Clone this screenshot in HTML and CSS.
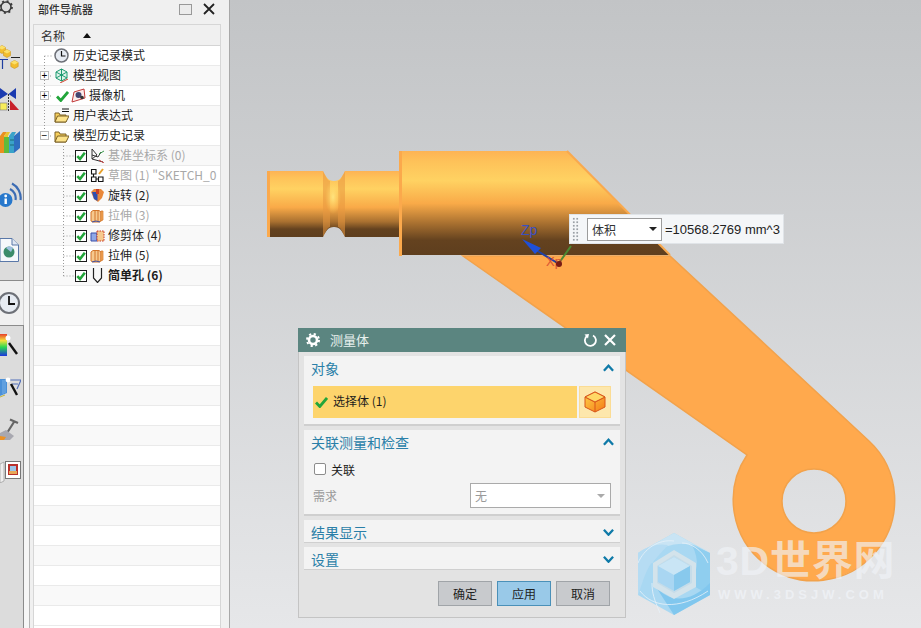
FILE: index.html
```html
<!DOCTYPE html>
<html lang="zh">
<head>
<meta charset="utf-8">
<title>测量体</title>
<link rel="stylesheet" href="styles.css">
</head>
<body>
<svg class="defs" width="0" height="0">
  <defs>
    <symbol id="chk" viewBox="0 0 12 12"><rect x=".5" y=".5" width="11" height="11" fill="#fff" stroke="#1c1c1c"/><path d="M2.300 6.200 5 9 9.800 2.800" fill="none" stroke="#22a53a" stroke-width="2.600"/></symbol>
    <symbol id="ext" viewBox="0 0 15 15"><path d="M1 4 3 2.500H9L11 4V13L9 14H3L1 13Z" fill="#f6c98e" stroke="#d2752a"/><path d="M5 3V13M8 3V13" stroke="#d2752a"/><path d="M2 14 6 13 10 14" stroke="#3a4fa8" fill="none"/><path d="M11 3H13V12L11 13Z" fill="#f3a95a" stroke="#d2752a" stroke-width=".7"/></symbol>
    <symbol id="cube" viewBox="0 0 10 11"><path d="M5 .5 9.500 3V8L5 10.500 .5 8V3Z" fill="#f2bd2e" stroke="#c8921c" stroke-width=".7"/><path d="M5 .5 9.500 3 5 5.500 .5 3Z" fill="#fbe06a"/></symbol>
  </defs>
</svg>
<div class="app">
  <aside class="toolbar">
    <div class="tool-group first">
      <svg class="t t-gear" viewBox="0 0 14 14"><circle cx="6" cy="7" r="5" fill="none" stroke="#3b3b3b" stroke-width="1.600"/><circle cx="6" cy="7" r="6" fill="none" stroke="#3b3b3b" stroke-width="1.800" stroke-dasharray="2 2.700"/></svg>
      <svg class="t t-boxes" viewBox="0 0 21 24"><use href="#cube" x="-2" y="0" width="8" height="9"/><use href="#cube" x="3" y="4" width="8" height="9"/><use href="#cube" x="10" y="15" width="9" height="9"/><path d="M0 14.500H8M2.500 14.500V24" stroke="#1f3fa0" stroke-width="1.200" fill="none"/><path d="M11 12.500H20" stroke="#222"/></svg>
      <svg class="t t-bow" viewBox="0 0 20 24"><path d="M0 1 8 7 0 12ZM16 1 8.500 7 16 12Z" fill="#1b3bb0"/><path d="M8.500 7V24" stroke="#333" stroke-dasharray="2 1"/><rect x="0" y="16" width="7" height="7" fill="#f6ec5a" stroke="#777" stroke-width=".6"/><path d="M10 23V13L19 23Z" fill="#c8202a"/></svg>
      <svg class="t t-books" viewBox="0 0 21 23"><path d="M0 5 3 1H7L4 5V22H0Z" fill="#e98f1f"/><path d="M4 5 7 1H10L8 5V22H4Z" fill="#ebc52e"/><rect x="4" y="6" width="5" height="16" fill="#5fbb3c"/><path d="M9 5 12 1H16L14 5V22H9Z" fill="#3aa3c9"/><path d="M14 5 20 0V17L14 22Z" fill="#2f6fbf"/><path d="M10 9H14M10 14H14" stroke="#155" stroke-width=".7"/></svg>
      <svg class="t t-wifi" viewBox="0 0 22 25"><path d="M10 7A10 10 0 0 1 15.500 18M12 1.500A16 16 0 0 1 20.500 18" fill="none" stroke="#3c6cb4" stroke-width="2.200"/><circle cx="5.500" cy="18" r="7" fill="#2878cc"/><rect x="4.500" y="16.500" width="2.400" height="5.500" fill="#fff"/><circle cx="5.700" cy="14" r="1.400" fill="#fff"/></svg>
      <svg class="t t-doc" viewBox="0 0 20 24"><path d="M0 .5H12L18.500 7V23.500H0Z" fill="#f6f8fb" stroke="#5a78a8"/><path d="M12 .5V7H18.500" fill="#dfe6f2" stroke="#5a78a8"/><circle cx="9" cy="14" r="5.500" fill="#3c8c6a"/><path d="M6 10A5 5 0 0 1 13 10L11 14Z" fill="#9fc0df"/></svg>
    </div>
    <div class="tool-gap">
      <svg class="t t-clock" viewBox="0 0 21 24"><circle cx="9" cy="12" r="10" fill="#e6ebf2" stroke="#6d7077" stroke-width="2"/><path d="M9 5V13H15" fill="none" stroke="#111" stroke-width="1.800"/></svg>
    </div>
    <div class="tool-group second">
      <svg class="t t-rain" viewBox="0 0 20 24"><defs><linearGradient id="rb" x1="0" x2="0" y1="0" y2="1"><stop offset="0" stop-color="#e8402a"/><stop offset=".3" stop-color="#f4e03a"/><stop offset=".6" stop-color="#28d850"/><stop offset="1" stop-color="#1c34e0"/></linearGradient></defs><rect x="-1" y="1" width="8" height="22" fill="url(#rb)"/><path d="M9 10 17 21" stroke="#111" stroke-width="2.400"/><circle cx="8" cy="5" r="2.500" fill="#fff"/></svg>
      <svg class="t t-fan" viewBox="0 0 21 23"><path d="M0 3H7V17L0 20Z" fill="#4a90d8"/><path d="M3 4V18M5 4V17" stroke="#8cc0ee" stroke-width=".7"/><path d="M10 4H21L17 13M12 8H18" fill="none" stroke="#5370ba" stroke-width="1.200"/><path d="M11 8 17 19" stroke="#111" stroke-width="2.400"/><circle cx="8" cy="4" r="2.400" fill="#fff"/><path d="M0 21 5 19" stroke="#c4b63a"/></svg>
      <svg class="t t-ham" viewBox="0 0 20 23"><path d="M7 15 14 4M10 1.500 18 5" stroke="#666" stroke-width="2.200" fill="none"/><path d="M0 15 6 12 14 18 10 22H0Z" fill="#a8a8b0"/><path d="M0 18 6 19 4 22H0Z" fill="#ec9226"/></svg>
      <svg class="t t-pic" viewBox="0 0 21 22"><path d="M0 3 4 1V20L0 22Z" fill="#eee" stroke="#999" stroke-width=".7"/><rect x="5.500" y=".5" width="15" height="17" fill="#fff" stroke="#777"/><rect x="8" y="3" width="10" height="11" fill="#b9302c"/><rect x="10" y="5" width="6" height="5" fill="#9cc4e8"/><rect x="9" y="10" width="8" height="3" fill="#e8a858"/></svg>
    </div>
  </aside>

  <section class="nav">
    <header class="nav-title">
      <span>部件导航器</span>
      <span class="nav-win"></span>
      <svg class="nav-close" viewBox="0 0 12 12"><path d="M1 1 11 11M11 1 1 11" stroke="#222" stroke-width="1.800"/></svg>
    </header>
    <div class="tree">
      <div class="tree-head"><span>名称</span><i class="sort"></i></div>
      <svg class="guides" width="60" height="240"><path d="M10.500 10V90M10.500 10H19M16 30H19M16 50H19M16 90H19M29.500 100V230M29.500 110H40M29.500 130H40M29.500 150H40M29.500 170H40M29.500 190H40M29.500 210H40M29.500 230H40" fill="none" stroke="#9a9a9a" stroke-dasharray="1 2"/></svg>

      <div class="row l1">
        <svg class="ic" viewBox="0 0 15 15"><circle cx="7.500" cy="7.500" r="6.500" fill="#e6ebf2" stroke="#6d7077" stroke-width="1.500"/><path d="M7.500 3V8H11.500" fill="none" stroke="#111" stroke-width="1.200"/></svg>
        <span>历史记录模式</span>
      </div>
      <div class="row l1 alt">
        <b class="tw">+</b>
        <svg class="ic" viewBox="0 0 15 15"><path d="M7.500 1 13 4V10L7.500 13 2 10V4Z M2 4 13 10M13 4 2 10M7.500 1V13" fill="#dff3ea" stroke="#1d9a70"/><path d="M6 15 14 11" stroke="#d0402c"/></svg>
        <span>模型视图</span>
      </div>
      <div class="row l1">
        <b class="tw">+</b>
        <svg class="ic-check" viewBox="0 0 13 12"><path d="M1 6.500 4.800 10.500 12 2" fill="none" stroke="#22a53a" stroke-width="2.800"/></svg>
        <svg class="ic cam" viewBox="0 0 15 15"><path d="M3 4 13 1 14 10 1 14Z" fill="#fbeaea" stroke="#c23a3a"/><circle cx="7.500" cy="7" r="3" fill="#444470"/><circle cx="11" cy="9.500" r="1.800" fill="#333"/></svg>
        <span>摄像机</span>
      </div>
      <div class="row l1 alt">
        <svg class="ic" viewBox="0 0 15 15"><path d="M1 14V5H5L6 7H12V14Z" fill="#f6cf5c" stroke="#7a6126"/><path d="M1 14 3.500 8H15L12 14Z" fill="#fde38a" stroke="#7a6126"/><path d="M8 1H15M8 3.500H15" stroke="#111"/></svg>
        <span>用户表达式</span>
      </div>
      <div class="row l1">
        <b class="tw open">−</b>
        <svg class="ic" viewBox="0 0 15 15"><path d="M1 14V4H5L6 6H12V14Z" fill="#f6cf5c" stroke="#7a6126"/><path d="M1 14 3.500 8H15L12 14Z" fill="#fde38a" stroke="#7a6126"/></svg>
        <span>模型历史记录</span>
      </div>
      <div class="row l2 alt muted">
        <svg class="box"><use href="#chk"/></svg>
        <svg class="ic2" viewBox="0 0 15 15"><path d="M2 1V11L7 7ZM2 11 13 14M2 7 8 9 11 4" fill="none" stroke="#333"/><path d="M9 12 14 15" stroke="#c83a3a"/><path d="M9 6 14 3" stroke="#3a9a4a"/></svg>
        <span>基准坐标系 (0)</span>
      </div>
      <div class="row l2 muted">
        <svg class="box"><use href="#chk"/></svg>
        <svg class="ic2" viewBox="0 0 15 15"><path d="M1.500 1.500H6V6H1.500ZM1.500 9H6V13.500H1.500ZM8.500 9H13V13.500H8.500ZM3.500 6V9M6 11H8.500" fill="#fff" stroke="#111" stroke-width="1.100"/><path d="M9 6 13 1" stroke="#e8a028" stroke-width="2"/></svg>
        <span>草图 (1) "SKETCH_0</span>
      </div>
      <div class="row l2 alt">
        <svg class="box"><use href="#chk"/></svg>
        <svg class="ic2" viewBox="0 0 15 15"><path d="M1 4 4 1H11L14 4 12 10 8 14 4 11Z" fill="#e9883a"/><path d="M7.500 4V13L4 11 2 4Z" fill="#2f4fb0"/><path d="M6 1H9V6H6Z" fill="#c8402a"/></svg>
        <span>旋转 (2)</span>
      </div>
      <div class="row l2 muted">
        <svg class="box"><use href="#chk"/></svg>
        <svg class="ic2"><use href="#ext"/></svg>
        <span>拉伸 (3)</span>
      </div>
      <div class="row l2 alt">
        <svg class="box"><use href="#chk"/></svg>
        <svg class="ic2" viewBox="0 0 15 15"><path d="M1 5H7V13H1Z" fill="#8fa8e8" stroke="#3a4fa8"/><path d="M7 3H14V13H7Z" fill="#f6c98e" stroke="#c83a2a" stroke-dasharray="1.500 1"/></svg>
        <span>修剪体 (4)</span>
      </div>
      <div class="row l2">
        <svg class="box"><use href="#chk"/></svg>
        <svg class="ic2"><use href="#ext"/></svg>
        <span>拉伸 (5)</span>
      </div>
      <div class="row l2 alt strong">
        <svg class="box"><use href="#chk"/></svg>
        <svg class="ic2" viewBox="0 0 15 15"><path d="M3.500 0V10L7.500 14.500 11.500 10V0" fill="none" stroke="#222" stroke-width="1.200"/></svg>
        <span>简单孔 (6)</span>
      </div>
      <div class="row"></div><div class="row alt"></div><div class="row"></div><div class="row alt"></div>
      <div class="row"></div><div class="row alt"></div><div class="row"></div><div class="row alt"></div>
      <div class="row"></div><div class="row alt"></div><div class="row"></div><div class="row alt"></div>
      <div class="row"></div><div class="row alt"></div><div class="row"></div><div class="row alt"></div>
      <div class="row"></div>
    </div>
  </section>

  <main class="canvas">
    <svg class="scene" viewBox="230 0 691 628" width="691" height="628">
      <defs>
        <linearGradient id="cyl" gradientUnits="userSpaceOnUse" x1="0" x2="0" y1="171" y2="237">
          <stop offset="0" stop-color="#fdb354"/>
          <stop offset=".1" stop-color="#fec259"/>
          <stop offset=".27" stop-color="#ffd262"/>
          <stop offset=".55" stop-color="#f9aa48"/>
          <stop offset=".77" stop-color="#a87030"/>
          <stop offset=".88" stop-color="#64421f"/>
          <stop offset="1" stop-color="#5e3e1e"/>
        </linearGradient>
        <radialGradient id="neck" cx=".5" cy=".5" r=".5">
          <stop offset="0" stop-color="#ffe680" stop-opacity=".95"/>
          <stop offset="1" stop-color="#ffd060" stop-opacity="0"/>
        </radialGradient>
        <linearGradient id="bodyg" gradientUnits="userSpaceOnUse" x1="0" x2="0" y1="151" y2="256">
          <stop offset="0" stop-color="#fdb354"/>
          <stop offset=".1" stop-color="#fec259"/>
          <stop offset=".28" stop-color="#ffd262"/>
          <stop offset=".5" stop-color="#f9aa48"/>
          <stop offset=".69" stop-color="#a87030"/>
          <stop offset=".85" stop-color="#64421f"/>
          <stop offset="1" stop-color="#5e3e1e"/>
        </linearGradient>
      </defs>
      <path class="arm" fill-rule="evenodd" d="M463 256H670L869 441A80.700 80.700 0 1 1 747 455ZM846 501A32 32 0 1 0 782 501A32 32 0 1 0 846 501Z"/>
      <path class="body" d="M399 151H567L670 255H399Z" fill="url(#bodyg)"/>
      <path class="edge" d="M567 151 670 255"/>
      <rect x="399" y="151" width="3" height="105" fill="#fba94c"/>
      <rect x="267" y="171" width="56" height="66" fill="url(#cyl)"/>
      <rect x="267" y="171" width="3" height="66" fill="#fba94c"/>
      <rect x="345" y="171" width="54" height="66" fill="url(#cyl)"/>
      <path d="M323 171C326 177 328 181 334 181C340 181 342 177 345 171V237C342 231 340 227 334 227C328 227 326 231 323 237Z" fill="url(#cyl)"/>
      <path class="rim" d="M323 171C326 177 328 181 330 181V227C328 227 326 231 323 237Z"/>
      <path class="rim" d="M345 171C342 177 340 181 338 181V227C340 227 342 231 345 237Z"/>
      <ellipse cx="333" cy="197" rx="8" ry="17" fill="url(#neck)"/>
      <g class="triad">
        <path d="M559 263 571 246" stroke="#4a8a32" stroke-width="2"/>
        <path d="M536 250 559 264" stroke="#2040a8" stroke-width="2"/>
        <path d="M522 239 541 248 535 254Z" fill="#1f50d8"/>
        <text class="zp" x="521" y="235">Zp</text>
        <text class="xp" x="546" y="266">Xp</text>
        <circle cx="559" cy="264" r="3" fill="#7a1c14"/>
      </g>
    </svg>

    <div class="measure">
      <i class="grip"></i>
      <div class="pick"><span>体积</span><i class="caret dark"></i></div>
      <span class="val">=10568.2769 mm^3</span>
    </div>

    <div class="dialog">
      <header class="dlg-title">
        <svg class="dlg-gear" viewBox="0 0 14 14"><circle cx="7" cy="7" r="4" fill="none" stroke="#fff" stroke-width="2.600"/><circle cx="7" cy="7" r="6" fill="none" stroke="#fff" stroke-width="2" stroke-dasharray="2.200 2.512"/></svg>
        <span class="dlg-name">测量体</span>
        <svg class="dlg-btn" viewBox="0 0 14 14"><path d="M4 3A5.500 5.500 0 1 0 10 2.500" fill="none" stroke="#fff" stroke-width="1.800"/><path d="M1.500 1.500 6 1 5 5.500Z" fill="#fff"/></svg>
        <svg class="dlg-btn" viewBox="0 0 14 14"><path d="M2 2 12 12M12 2 2 12" stroke="#fff" stroke-width="2.200"/></svg>
      </header>
      <section class="sec sec-obj">
        <div class="sec-head"><span>对象</span><svg class="chev" viewBox="0 0 12 8"><path d="M1 7 6 1.500 11 7" /></svg></div>
        <div class="sel-row">
          <div class="sel-main">
            <svg class="sel-check" viewBox="0 0 13 12"><path d="M1 6.500 4.800 10.500 12 2" fill="none" stroke="#22a53a" stroke-width="2.800"/></svg>
            <span>选择体 (1)</span>
          </div>
          <div class="sel-btn">
            <svg viewBox="0 0 22 22" width="22" height="22"><defs><linearGradient id="cb" x1="0" y1="0" x2="1" y2="1"><stop offset="0" stop-color="#ffd24a"/><stop offset="1" stop-color="#f47a14"/></linearGradient></defs><path d="M11 1 21 6V16L11 21 1 16V6Z" fill="url(#cb)" stroke="#d8541a"/><path d="M1 6 11 11 21 6M11 11V21" fill="none" stroke="#d8541a"/><path d="M11 1 21 6 11 11 1 6Z" fill="#ffd866" stroke="#d8541a"/></svg>
          </div>
        </div>
      </section>
      <section class="sec sec-assoc">
        <div class="sec-head"><span>关联测量和检查</span><svg class="chev" viewBox="0 0 12 8"><path d="M1 7 6 1.500 11 7" /></svg></div>
        <label class="assoc"><i class="cb"></i><span>关联</span></label>
        <div class="req">
          <span>需求</span>
          <div class="req-pick"><span>无</span><i class="caret"></i></div>
        </div>
      </section>
      <section class="sec sec-col">
        <div class="sec-head"><span>结果显示</span><svg class="chev" viewBox="0 0 12 8"><path d="M1 1.500 6 7 11 1.500" /></svg></div>
      </section>
      <section class="sec sec-col">
        <div class="sec-head"><span>设置</span><svg class="chev" viewBox="0 0 12 8"><path d="M1 1.500 6 7 11 1.500" /></svg></div>
      </section>
      <footer class="dlg-foot">
        <button class="btn">确定</button>
        <button class="btn primary">应用</button>
        <button class="btn">取消</button>
      </footer>
    </div>

    <div class="mark">
      <svg class="mark-logo" viewBox="0 0 72 82" width="72" height="82">
        <path d="M36 0 72 20V62L36 82 0 62V20Z" fill="#a6d8f3"/>
        <path d="M36 0 72 20C60 10 44 8 26 14L14 30C8 24 4 22 0 20Z" fill="#c8e5f5"/>
        <path d="M72 20V62L50 50C60 40 62 28 54 12Z" fill="#8bcdf0"/>
        <path d="M72 62 36 82 18 54C32 70 52 70 72 50Z" fill="#7cc6ef"/>
        <path d="M0 20C8 14 18 10 30 12L12 32 C6 42 4 52 0 62Z" fill="#b4dcf4"/>
        <path d="M36 17 58 30V54L36 66 15 54V30Z" fill="#d3e3ec"/>
        <path d="M36 22 54 33V50L36 60 19 50V33Z" fill="#c4dcea"/>
        <path d="M36 24 52 33V49L36 58 20 49V33Z" fill="#a6d6f3"/>
        <path d="M36 24 52 33 36 42 20 33Z" fill="#c8e6f6"/>
        <path d="M36 42 52 33V49L36 58Z" fill="#84c8ee"/>
        <path d="M0 30C6 16 20 6 36 8M70 30C64 16 52 10 44 10M2 58C14 74 40 78 70 58M22 80C16 66 14 60 14 50" fill="none" stroke="#e8f3fa" stroke-width=".8"/>
      </svg>
      <div class="mark-text">
        <span class="mark-big">3D世界网</span>
        <span class="mark-url">WWW.3DSJW.COM</span>
      </div>
    </div>
  </main>
</div>
</body>
</html>
```
FILE: styles.css
```css
* { box-sizing: border-box; }
html, body { margin: 0; height: 100%; overflow: hidden; }
body { font-family: "Noto Sans CJK SC", "Liberation Sans", sans-serif; font-size: 12px; color: #1c1c1c; }
.defs { position: absolute; }
.app { display: flex; width: 921px; height: 628px; overflow: hidden; }

/* left toolbar */
.toolbar { width: 24px; flex: none; display: flex; flex-direction: column; background: #f0f0f0; overflow: hidden; }
.tool-group { background: #dcdcdc; border-right: 1px solid #8b8b8b; display: flex; flex-direction: column; }
.tool-group.first { height: 281px; border-bottom: 1px solid #8b8b8b; }
.tool-gap { height: 44px; display: flex; align-items: center; border-right: 1px solid #d0d0d0; }
.tool-group.second { flex: 1; border-top: 1px solid #8b8b8b; }
.t { display: block; flex: none; overflow: hidden; }
.t-gear { width: 14px; height: 14px; }
.t-boxes { width: 21px; height: 24px; margin-top: 31px; }
.t-bow { width: 20px; height: 24px; margin-top: 18px; }
.t-books { width: 21px; height: 23px; margin-top: 20px; }
.t-wifi { width: 22px; height: 25px; margin-top: 28px; }
.t-doc { width: 20px; height: 24px; margin-top: 31px; }
.t-clock { width: 21px; height: 24px; }
.t-rain { width: 20px; height: 24px; margin-top: 7px; }
.t-fan { width: 21px; height: 23px; margin-top: 19px; }
.t-ham { width: 20px; height: 23px; margin-top: 19px; }
.t-pic { width: 21px; height: 22px; margin-top: 20px; }

/* part navigator */
.nav { width: 206px; flex: none; padding-left: 4px; padding-right: 8px; background: #f0f0f0; border-left: 5px solid #f6f6f6; border-right: 1px solid #a8a8a8; display: flex; flex-direction: column; position: relative; }
.nav::before { content: ""; position: absolute; left: 0; top: 0; bottom: 0; width: 1px; background: #b4b4b4; }
.nav-title { height: 24px; flex: none; display: flex; align-items: center; font-size: 11px; font-weight: 500; color: #333; padding: 0 6px 6px 5px; }
.nav-title > span:first-child { flex: 1; }
.nav-win { width: 13px; height: 11px; border: 1px solid #999; background: #ececec; margin-right: 11px; margin-top: 1px; }
.nav-close { width: 12px; height: 12px; }
.tree { flex: 1; background: #fff; border: 1px solid #d6d6d6; border-bottom: 0; position: relative; overflow: hidden; }
.tree-head { height: 21px; background: #f0f0f0; border-bottom: 1px solid #d4d4d4; display: flex; align-items: center; padding-left: 7px; font-size: 12px; color: #333; }
.sort { width: 0; height: 0; border-left: 4.500px solid transparent; border-right: 4.500px solid transparent; border-bottom: 5px solid #111; margin-left: 18px; }
.guides { position: absolute; left: 0; top: 21px; z-index: 1; }
.row { height: 20px; border-bottom: 1px solid #eaeaea; display: flex; align-items: center; background: #fff; white-space: nowrap; overflow: hidden; }
.row.alt { background: #f9f9f9; }
.row span { position: relative; top: -1px; }
.l1 { padding-left: 20px; position: relative; }
.l2 { padding-left: 41px; }
.tw { position: absolute; left: 6px; top: 5px; width: 9px; height: 9px; z-index: 2; background: #fff; border: 1px solid #bbb; font: 400 10px/7px "Liberation Sans", sans-serif; text-align: center; color: #000; }
.ic { width: 15px; height: 15px; flex: none; margin-right: 4px; position: relative; z-index: 2; }
.ic-check { width: 13px; height: 12px; flex: none; margin: 0 2px; }
.ic.cam { margin-right: 3px; }
.box { width: 12px; height: 12px; flex: none; margin-right: 3px; position: relative; z-index: 2; }
.ic2 { width: 15px; height: 15px; flex: none; margin-right: 3px; }
.muted { color: #a8a8a8; }
.strong { font-weight: 700; }

/* canvas */
.canvas { flex: 1; position: relative; background: linear-gradient(#c2c4c6, #e6e7e9); overflow: hidden; }
.scene { position: absolute; left: 0; top: 0; }
.arm { fill: #ffa94d; stroke: #f2a24b; stroke-width: 1.500; }
.edge { stroke: #f9a94e; stroke-width: 2; fill: none; }
.rim { fill: #e8983f; opacity: .55; }
.zp { font: 14px "Liberation Sans", sans-serif; fill: #3a50c0; }
.xp { font: 13px "Liberation Sans", sans-serif; fill: #d0402e; opacity: .8; }

/* measure label */
.measure { position: absolute; left: 339px; top: 214px; width: 215px; height: 30px; background: #f4f6f8; border: 1px solid #e0e4e8; display: flex; align-items: center; padding-left: 2px; }
.grip { width: 7px; height: 24px; flex: none; background-image: radial-gradient(circle, #9aa0a6 1px, transparent 1.200px); background-size: 3.500px 3.500px; margin-right: 8px; }
.pick { width: 75px; height: 23px; flex: none; background: #fff; border: 1px solid #9c9c9c; display: flex; align-items: center; justify-content: space-between; padding: 0 4px; font-size: 12px; color: #333; }
.val { margin-left: 3px; font: 13px "Liberation Sans", sans-serif; color: #222; white-space: nowrap; }
.caret { width: 0; height: 0; border-left: 4px solid transparent; border-right: 4px solid transparent; border-top: 4px solid #aaa; }
.caret.dark { border-top-color: #222; }

/* dialog */
.dialog { position: absolute; left: 68px; top: 328px; width: 328px; height: 290px; background: #e3e3e3; border: 1px solid #c4c4c4; border-top: 0; display: flex; flex-direction: column; }
.dlg-title { height: 24px; flex: none; margin: 0 -1px; background: #5b8580; color: #e8f0ee; display: flex; align-items: center; padding: 0 9px 0 8px; font-size: 13px; }
.dlg-title > span { position: relative; top: -1px; }
.dlg-gear { width: 14px; height: 14px; flex: none; }
.dlg-name { flex: 1; margin-left: 10px; }
.dlg-btn { width: 14px; height: 14px; flex: none; margin-left: 6px; }
.sec { margin: 4px 5px 0; background: #f3f3f3; border-bottom: 2px solid #cfcfcf; flex: none; }
.sec-obj { height: 70px; }
.sec-assoc { height: 86px; }
.sec-col { height: 23px; border-bottom-width: 1px; }
.sec-head { height: 24px; display: flex; align-items: center; justify-content: space-between; padding: 0 6px 0 7px; color: #2a7fa8; font-size: 14px; }
.sec-col .sec-head { height: 23px; }
.chev { width: 11px; height: 8px; fill: none; stroke: #0f7aa8; stroke-width: 2.500; }
.sel-row { display: flex; margin: 6px 9px 0; height: 32px; }
.sel-main { width: 264px; background: #fdd46c; display: flex; align-items: center; padding-left: 2px; }
.sel-main > span { position: relative; top: -1.500px; }
.sel-check { width: 13px; height: 12px; flex: none; margin-right: 5px; }
.sel-btn { width: 32px; margin-left: 2px; background: #fde7ac; border: 1px solid #fbdc94; display: flex; align-items: center; justify-content: center; }
.assoc { display: flex; align-items: center; margin: 5px 0 0 10px; height: 20px; }
.cb { width: 12px; height: 12px; background: #fff; border: 1px solid #8c8c8c; border-radius: 2px; margin-right: 5px; }
.req { display: flex; align-items: center; justify-content: space-between; margin: 4px 9px 0; color: #9a9a9a; }
.req-pick { width: 141px; height: 25px; background: #fff; border: 1px solid #aaa; display: flex; align-items: center; justify-content: space-between; padding: 0 5px 0 4px; }
.dlg-foot { display: flex; gap: 5px; justify-content: flex-end; padding: 11px 15px 0 0; }
.btn { width: 54px; height: 25px; padding: 0; font: 12px "Noto Sans CJK SC", sans-serif; color: #222; background: #c8cacd; border: 1px solid #a0a4a8; }
.btn.primary { background: #99c9e8; border-color: #4a90b8; }

/* watermark */
.mark { position: absolute; left: 408px; top: 533px; display: flex; pointer-events: none; }
.mark-logo { flex: none; opacity: .95; }
.mark-text { display: flex; flex-direction: column; margin-left: 6px; margin-top: 6px; }
.mark-big { font: 700 41px/44px "Liberation Sans", "Noto Sans CJK SC", sans-serif; letter-spacing: .8px; color: rgba(240, 243, 247, .66); white-space: nowrap; }
.mark-url { font: 700 13px/14px "Liberation Sans", sans-serif; letter-spacing: 4px; color: rgba(240, 243, 247, .75); margin-top: 5px; margin-left: 2px; white-space: nowrap; }
```
